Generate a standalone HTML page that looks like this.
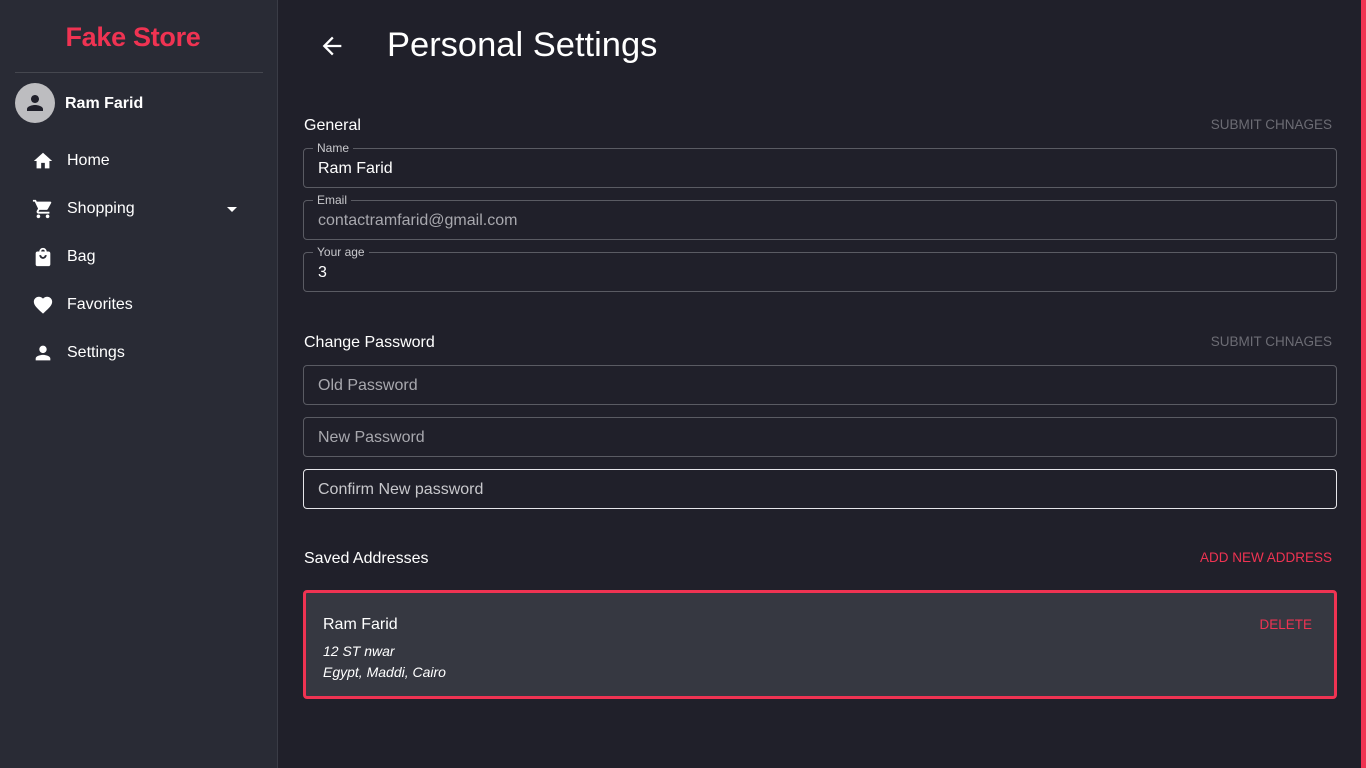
<!DOCTYPE html>
<html><head><meta charset="utf-8"><style>
*{box-sizing:border-box;margin:0;padding:0}
body{width:1366px;height:768px;overflow:hidden;background:#20202a;font-family:"Liberation Sans",Arial,sans-serif;color:#fff;position:relative}
.side{position:absolute;left:0;top:0;width:278px;height:768px;background:#292b35;border-right:1px solid #3a3c46}
.logo{position:absolute;left:0;width:266px;top:22px;text-align:center;color:#ef3352;font-size:27px;font-weight:bold;letter-spacing:-0.3px}
.hr{position:absolute;left:15px;width:248px;top:72px;height:1px;background:#45474f}
.av{position:absolute;left:15px;top:83px;width:40px;height:40px;border-radius:50%;background:#bdbdc0}
.uname{position:absolute;left:65px;top:95px;font-size:16px;font-weight:bold}
.item{position:absolute;left:32px;font-size:16px;height:20px;display:flex;align-items:center}
.item svg{width:22px;height:22px;fill:#fff;margin-right:13px}
.sb{position:absolute;right:0;top:0;width:5px;height:768px;background:#ef3352}
.title{position:absolute;left:387px;top:26px;font-size:34.5px}
.h{position:absolute;left:304px;font-size:16px}
.btn{position:absolute;right:34px;font-size:13.5px;color:#6c6c74}
.f{position:absolute;left:303px;width:1034px;height:40px;border:1px solid #5a5b63;border-radius:4px;padding:1px 14px 0;display:flex;align-items:center;font-size:16px}
.f.ph{color:#a8a8ae}
.f .l{position:absolute;left:9px;top:-8px;font-size:12px;background:#20202a;padding:0 4px;color:#c8c8cc;line-height:14px}
.card{position:absolute;left:303px;top:590px;width:1034px;height:109px;border:3px solid #ef3352;border-radius:4px;background:#363841}
</style></head><body>
<div class="side">
<div class="logo">Fake Store</div>
<div class="hr"></div>
<div class="av"><svg viewBox="0 0 24 24" width="40" height="40" style="padding:8px"><path fill="#20202a" d="M12 12c2.2 0 4-1.8 4-4s-1.8-4-4-4-4 1.8-4 4 1.8 4 4 4zm0 2c-2.7 0-8 1.3-8 4v2h16v-2c0-2.7-5.3-4-8-4z"/></svg></div>
<div class="uname">Ram Farid</div>
<div class="item" style="top:151px"><svg viewBox="0 0 24 24"><path d="M10 20v-6h4v6h5v-8h3L12 3 2 12h3v8z"/></svg>Home</div>
<div class="item" style="top:199px"><svg viewBox="0 0 24 24"><path d="M7 18c-1.1 0-2 .9-2 2s.9 2 2 2 2-.9 2-2-.9-2-2-2zM1 2v2h2l3.6 7.6-1.4 2.4c-.1.3-.2.6-.2 1 0 1.1.9 2 2 2h12v-2H7.4c-.1 0-.2-.1-.2-.2v-.1l.9-1.7h7.5c.8 0 1.4-.4 1.7-1l3.6-6.5c.1-.2.1-.3.1-.5 0-.6-.4-1-1-1H5.2l-.9-2H1zm16 16c-1.1 0-2 .9-2 2s.9 2 2 2 2-.9 2-2-.9-2-2-2z"/></svg>Shopping</div>
<div style="position:absolute;left:227px;top:207px;border-left:5px solid transparent;border-right:5px solid transparent;border-top:5px solid #fff"></div>
<div class="item" style="top:247px"><svg viewBox="0 0 24 24"><path d="M18 6h-2c0-2.2-1.8-4-4-4S8 3.8 8 6H6c-1.1 0-2 .9-2 2v12c0 1.1.9 2 2 2h12c1.1 0 2-.9 2-2V8c0-1.1-.9-2-2-2zm-6-2c1.1 0 2 .9 2 2h-4c0-1.1.9-2 2-2zm0 10c-2.2 0-4-1.8-4-4h2c0 1.1.9 2 2 2s2-.9 2-2h2c0 2.2-1.8 4-4 4z"/></svg>Bag</div>
<div class="item" style="top:295px"><svg viewBox="0 0 24 24"><path d="M12 21.4l-1.5-1.3C5.4 15.4 2 12.3 2 8.5 2 5.4 4.4 3 7.5 3c1.7 0 3.4.8 4.5 2.1C13.1 3.8 14.8 3 16.5 3 19.6 3 22 5.4 22 8.5c0 3.8-3.4 6.9-8.5 11.5L12 21.4z"/></svg>Favorites</div>
<div class="item" style="top:343px"><svg viewBox="0 0 24 24"><path d="M12 12c2.2 0 4-1.8 4-4s-1.8-4-4-4-4 1.8-4 4 1.8 4 4 4zm0 2c-2.7 0-8 1.3-8 4v2h16v-2c0-2.7-5.3-4-8-4z"/></svg>Settings</div>
</div>
<div class="sb"></div>
<svg style="position:absolute;left:318px;top:32px" width="28" height="28" viewBox="0 0 24 24"><path fill="#fff" d="M20 11H7.8l5.6-5.6L12 4l-8 8 8 8 1.4-1.4L7.8 13H20z"/></svg>
<div class="title">Personal Settings</div>
<div class="h" style="top:117px">General</div>
<div class="btn" style="top:117px">SUBMIT CHNAGES</div>
<div class="f" style="top:148px"><span class="l">Name</span>Ram Farid</div>
<div class="f ph" style="top:200px"><span class="l">Email</span>contactramfarid@gmail.com</div>
<div class="f" style="top:252px"><span class="l">Your age</span>3</div>
<div class="h" style="top:334px">Change Password</div>
<div class="btn" style="top:334px">SUBMIT CHNAGES</div>
<div class="f ph" style="top:365px">Old Password</div>
<div class="f ph" style="top:417px">New Password</div>
<div class="f ph" style="top:469px;border-color:#e6e6ea;color:#c8c8cc">Confirm New password</div>
<div class="h" style="top:550px">Saved Addresses</div>
<div class="btn" style="top:550px;color:#ef3352">ADD NEW ADDRESS</div>
<div class="card">
<div style="position:absolute;left:17px;top:23px;font-size:16px">Ram Farid</div>
<div style="position:absolute;right:22px;top:24px;font-size:13.5px;color:#ef3352">DELETE</div>
<div style="position:absolute;left:17px;top:50px;font-size:14px;font-style:italic">12 ST nwar</div>
<div style="position:absolute;left:17px;top:71px;font-size:14px;font-style:italic">Egypt, Maddi, Cairo</div>
</div>
</body></html>
